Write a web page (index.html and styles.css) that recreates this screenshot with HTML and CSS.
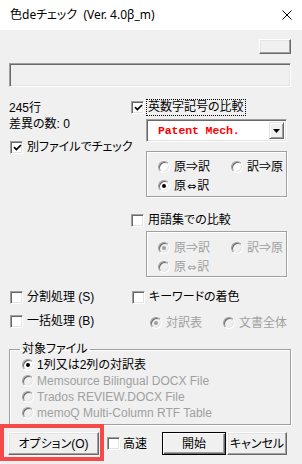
FILE: index.html
```html
<!DOCTYPE html>
<html lang="ja">
<head>
<meta charset="utf-8">
<title>色deチェック</title>
<link rel="stylesheet" href="styles.css">
</head>
<body>
<div class="window">
  <div class="titlebar">
    <span class="title">色deチェック&nbsp; (Ver. 4.0β_m)</span>
    <svg class="close" width="10" height="10" viewBox="0 0 10 10"><path d="M0.5 0.5 L9.5 9.5 M9.5 0.5 L0.5 9.5" stroke="#000" stroke-width="1" fill="none"/></svg>
  </div>
  <div class="client">
    <div class="top-row"><div class="btn btn-small"></div></div>
    <div class="status-box"></div>

    <div class="main">
      <div class="col-left">
        <div class="line">245行</div>
        <div class="line">差異の数: 0</div>
        <div class="check-row mt7 ml1"><span class="cb"><svg width="9" height="9" viewBox="0 0 9 9"><path d="M1 4.2 L3.4 6.6 L8 2" stroke="#000" stroke-width="1.7" fill="none"/></svg></span><span class="lbl">別ファイルでチェック</span></div>
      </div>
      <div class="col-right">
        <div class="check-row"><span class="cb"><svg width="9" height="9" viewBox="0 0 9 9"><path d="M1 4.2 L3.4 6.6 L8 2" stroke="#000" stroke-width="1.7" fill="none"/></svg></span><span class="lbl focus">英数字記号の比較</span></div>
        <div class="combo">
          <span class="combo-text">Patent Mech.</span>
          <span class="combo-btn"><svg width="7" height="4" viewBox="0 0 7 4"><path d="M0 0 H7 L3.5 4 Z" fill="#000"/></svg></span>
        </div>
        <div class="group g1">
          <div class="radio-grid">
            <div class="radio-row"><span class="rb"></span><span class="lbl">原⇒訳</span></div>
            <div class="radio-row"><span class="rb"></span><span class="lbl">訳⇒原</span></div>
            <div class="radio-row"><span class="rb on"></span><span class="lbl">原<span class="arr">⇔</span>訳</span></div>
          </div>
        </div>
        <div class="check-row mt15"><span class="cb"></span><span class="lbl">用語集での比較</span></div>
        <div class="group g2 disabled">
          <div class="radio-grid">
            <div class="radio-row"><span class="rb on"></span><span class="lbl">原⇒訳</span></div>
            <div class="radio-row"><span class="rb"></span><span class="lbl">訳⇒原</span></div>
            <div class="radio-row"><span class="rb"></span><span class="lbl">原<span class="arr">⇔</span>訳</span></div>
          </div>
        </div>
      </div>
    </div>

    <div class="options">
      <div class="check-row ml1"><span class="cb"></span><span class="lbl">分割処理 (S)</span></div>
      <div class="check-row ml1"><span class="cb"></span><span class="lbl">キーワードの着色</span></div>
      <div class="check-row ml1"><span class="cb"></span><span class="lbl">一括処理 (B)</span></div>
      <div class="kw-radios disabled">
        <div class="radio-row"><span class="rb on"></span><span class="lbl">対訳表</span></div>
        <div class="radio-row"><span class="rb"></span><span class="lbl">文書全体</span></div>
      </div>
    </div>

    <fieldset class="target">
      <legend>対象ファイル</legend>
      <div class="radio-row"><span class="rb on"></span><span class="lbl">1列又は2列の対訳表</span></div>
      <div class="radio-row disabled"><span class="rb"></span><span class="lbl">Memsource Bilingual DOCX File</span></div>
      <div class="radio-row disabled"><span class="rb"></span><span class="lbl">Trados REVIEW.DOCX File</span></div>
      <div class="radio-row disabled"><span class="rb"></span><span class="lbl">memoQ Multi-Column RTF Table</span></div>
    </fieldset>

    <div class="actions">
      <div class="btn btn-option">オプション(O)</div>
      <div class="check-row"><span class="cb"></span><span class="lbl">高速</span></div>
      <div class="btn btn-default">開始</div>
      <div class="btn btn-cancel">キャンセル</div>
    </div>
  </div>
  <div class="highlight"></div>
</div>
</body>
</html>
```

FILE: styles.css
```css
html, body {
  margin: 0;
  padding: 0;
}
body {
  width: 302px;
  height: 464px;
  overflow: hidden;
  background: #f0f0f0;
  font-family: "Liberation Sans", "Noto Sans CJK JP", sans-serif;
  font-size: 12px;
  font-feature-settings: "palt";
  color: #000;
}
.window {
  position: relative;
  width: 302px;
  height: 464px;
  background: #f0f0f0;
}
.titlebar {
  height: 30px;
  background: #fff;
  display: flex;
  align-items: center;
  padding-left: 10px;
}
.title {
  font-family: "Noto Sans", "Noto Sans CJK JP", sans-serif;
  font-size: 12px;
  line-height: 16px;
}
.close {
  margin-left: auto;
  margin-right: 10px;
}

.top-row {
  display: flex;
  justify-content: flex-end;
  padding: 9px 11px 0 0;
}
.btn {
  box-sizing: border-box;
  background: #f0f0f0;
  border: 1px solid;
  border-color: #fff #696969 #696969 #fff;
  box-shadow: inset -1px -1px #a0a0a0, inset 1px 1px #e3e3e3;
  display: flex;
  align-items: center;
  justify-content: center;
  line-height: 16px;
  white-space: nowrap;
}
.btn-small {
  width: 32px;
  height: 15px;
}
.status-box {
  box-sizing: border-box;
  margin: 9px 11px 0 9px;
  height: 24px;
  border: 1px solid;
  border-color: #a0a0a0 #fff #fff #a0a0a0;
  box-shadow: inset 1px 1px #696969, inset -1px -1px #e3e3e3;
}

.main {
  display: flex;
  padding-left: 9px;
  margin-top: 12px;
}
.col-left {
  width: 122px;
  flex: none;
  padding-top: 1px;
}
.col-right {
  width: 160px;
  flex: none;
}
.line {
  height: 16px;
  line-height: 16px;
  white-space: nowrap;
}
.lbl {
  white-space: nowrap;
}
.arr {
  font-family: "DejaVu Sans", sans-serif;
  font-size: 11px;
  margin: 0 1px;
}
.check-row {
  display: flex;
  align-items: center;
  height: 16px;
  line-height: 16px;
}
.check-row .lbl {
  margin-left: 4px;
}
.mt7 { margin-top: 7px; }
.mt15 { margin-top: 15px; }
.ml1 { margin-left: 1px; }

.cb {
  box-sizing: border-box;
  width: 13px;
  height: 13px;
  flex: none;
  background: #fff;
  border: 1px solid;
  border-color: #a0a0a0 #fff #fff #a0a0a0;
  box-shadow: inset 1px 1px #696969, inset -1px -1px #e3e3e3;
  display: flex;
  align-items: center;
  justify-content: center;
}
.cb svg { margin: 1px 0 0 1px; }
.lbl.focus {
  margin-left: 3px;
  padding: 0 1px;
  outline: 1px dotted #000;
  outline-offset: 0;
  line-height: 15px;
}

.combo {
  box-sizing: border-box;
  margin: 4px 0 0 15px;
  width: 141px;
  height: 23px;
  background: #fff;
  border: 1px solid;
  border-color: #a0a0a0 #fff #fff #a0a0a0;
  box-shadow: inset 1px 1px #696969, inset -1px -1px #e3e3e3;
  display: flex;
  align-items: center;
  padding: 2px 2px 2px 11px;
}
.combo-text {
  font-family: "Liberation Mono", "DejaVu Sans Mono", monospace;
  font-weight: bold;
  font-size: 11.5px;
  color: #ff0000;
  letter-spacing: -0.1px;
  white-space: nowrap;
}
.combo-btn {
  margin-left: auto;
  box-sizing: border-box;
  width: 15px;
  height: 17px;
  background: #f0f0f0;
  border: 1px solid;
  border-color: #e3e3e3 #696969 #696969 #e3e3e3;
  box-shadow: inset 1px 1px #fff, inset -1px -1px #a0a0a0;
  display: flex;
  align-items: center;
  justify-content: center;
}

.group {
  box-sizing: border-box;
  margin-left: 15px;
  width: 141px;
  height: 46px;
  border: 1px solid #a0a0a0;
  box-shadow: inset 1px 1px #fff, 1px 1px #fff;
  padding-left: 11px;
}
.g1 {
  margin-top: 9px;
  padding-top: 6px;
}
.g2 {
  margin-top: 3px;
  padding-top: 7px;
}
.radio-grid {
  display: grid;
  grid-template-columns: 73px auto;
  row-gap: 1px;
}
.radio-row {
  display: flex;
  align-items: center;
  height: 18px;
  line-height: 16px;
}
.radio-row .lbl {
  margin-left: 4px;
}
.rb {
  position: relative;
  box-sizing: border-box;
  width: 12px;
  height: 12px;
  flex: none;
  border-radius: 50%;
  background: #fff;
  border: 1px solid;
  border-color: #a0a0a0 #fff #fff #a0a0a0;
  box-shadow: inset 1px 1px #696969, inset -1px -1px #e3e3e3;
}
.rb.on::after {
  content: "";
  position: absolute;
  left: 3px;
  top: 3px;
  width: 4px;
  height: 4px;
  border-radius: 50%;
  background: #000;
}
.disabled .lbl,
.disabled.radio-row .lbl {
  color: #a0a0a0;
}
.disabled .rb {
  background: #f0f0f0;
}
.disabled .rb.on::after {
  background: #a0a0a0;
}

.options {
  display: grid;
  grid-template-columns: 122px auto;
  row-gap: 8px;
  padding-left: 9px;
  margin-top: 12px;
}
.kw-radios {
  display: grid;
  grid-template-columns: 73px auto;
  margin-left: 19px;
  align-items: center;
}
.kw-radios .radio-row {
  height: 16px;
  margin-top: 2px;
}

.target {
  margin: 10px 11px 0 9px;
  border: 1px solid #a0a0a0;
  box-shadow: inset 1px 1px #fff, 1px 1px #fff;
  padding: 0 0 3px 12px;
  min-width: 0;
}
.target legend {
  margin-left: -2px;
  padding: 0 2px;
  line-height: 16px;
  height: 16px;
}
.target .radio-row {
  height: 16px;
}
.target .radio-row .lbl {
  margin-left: 3px;
}

.actions {
  display: flex;
  align-items: center;
  margin-top: 7px;
  padding: 0 15px 0 8px;
}
.btn-option {
  width: 91px;
  height: 23px;
}
.actions .check-row {
  margin-left: 8px;
}
.actions .check-row .lbl {
  margin-left: 3px;
}
.btn-default {
  margin-left: auto;
  width: 64px;
  height: 23px;
  border: 1px solid #000;
  box-shadow: inset 1px 1px #fff, inset -1px -1px #696969, inset -2px -2px #a0a0a0;
}
.btn-cancel {
  margin-left: 1px;
  width: 60px;
  height: 23px;
}

.highlight {
  position: absolute;
  left: 0;
  top: 424px;
  width: 104px;
  height: 37px;
  box-sizing: border-box;
  border: 4px solid #f44a4a;
}
```
